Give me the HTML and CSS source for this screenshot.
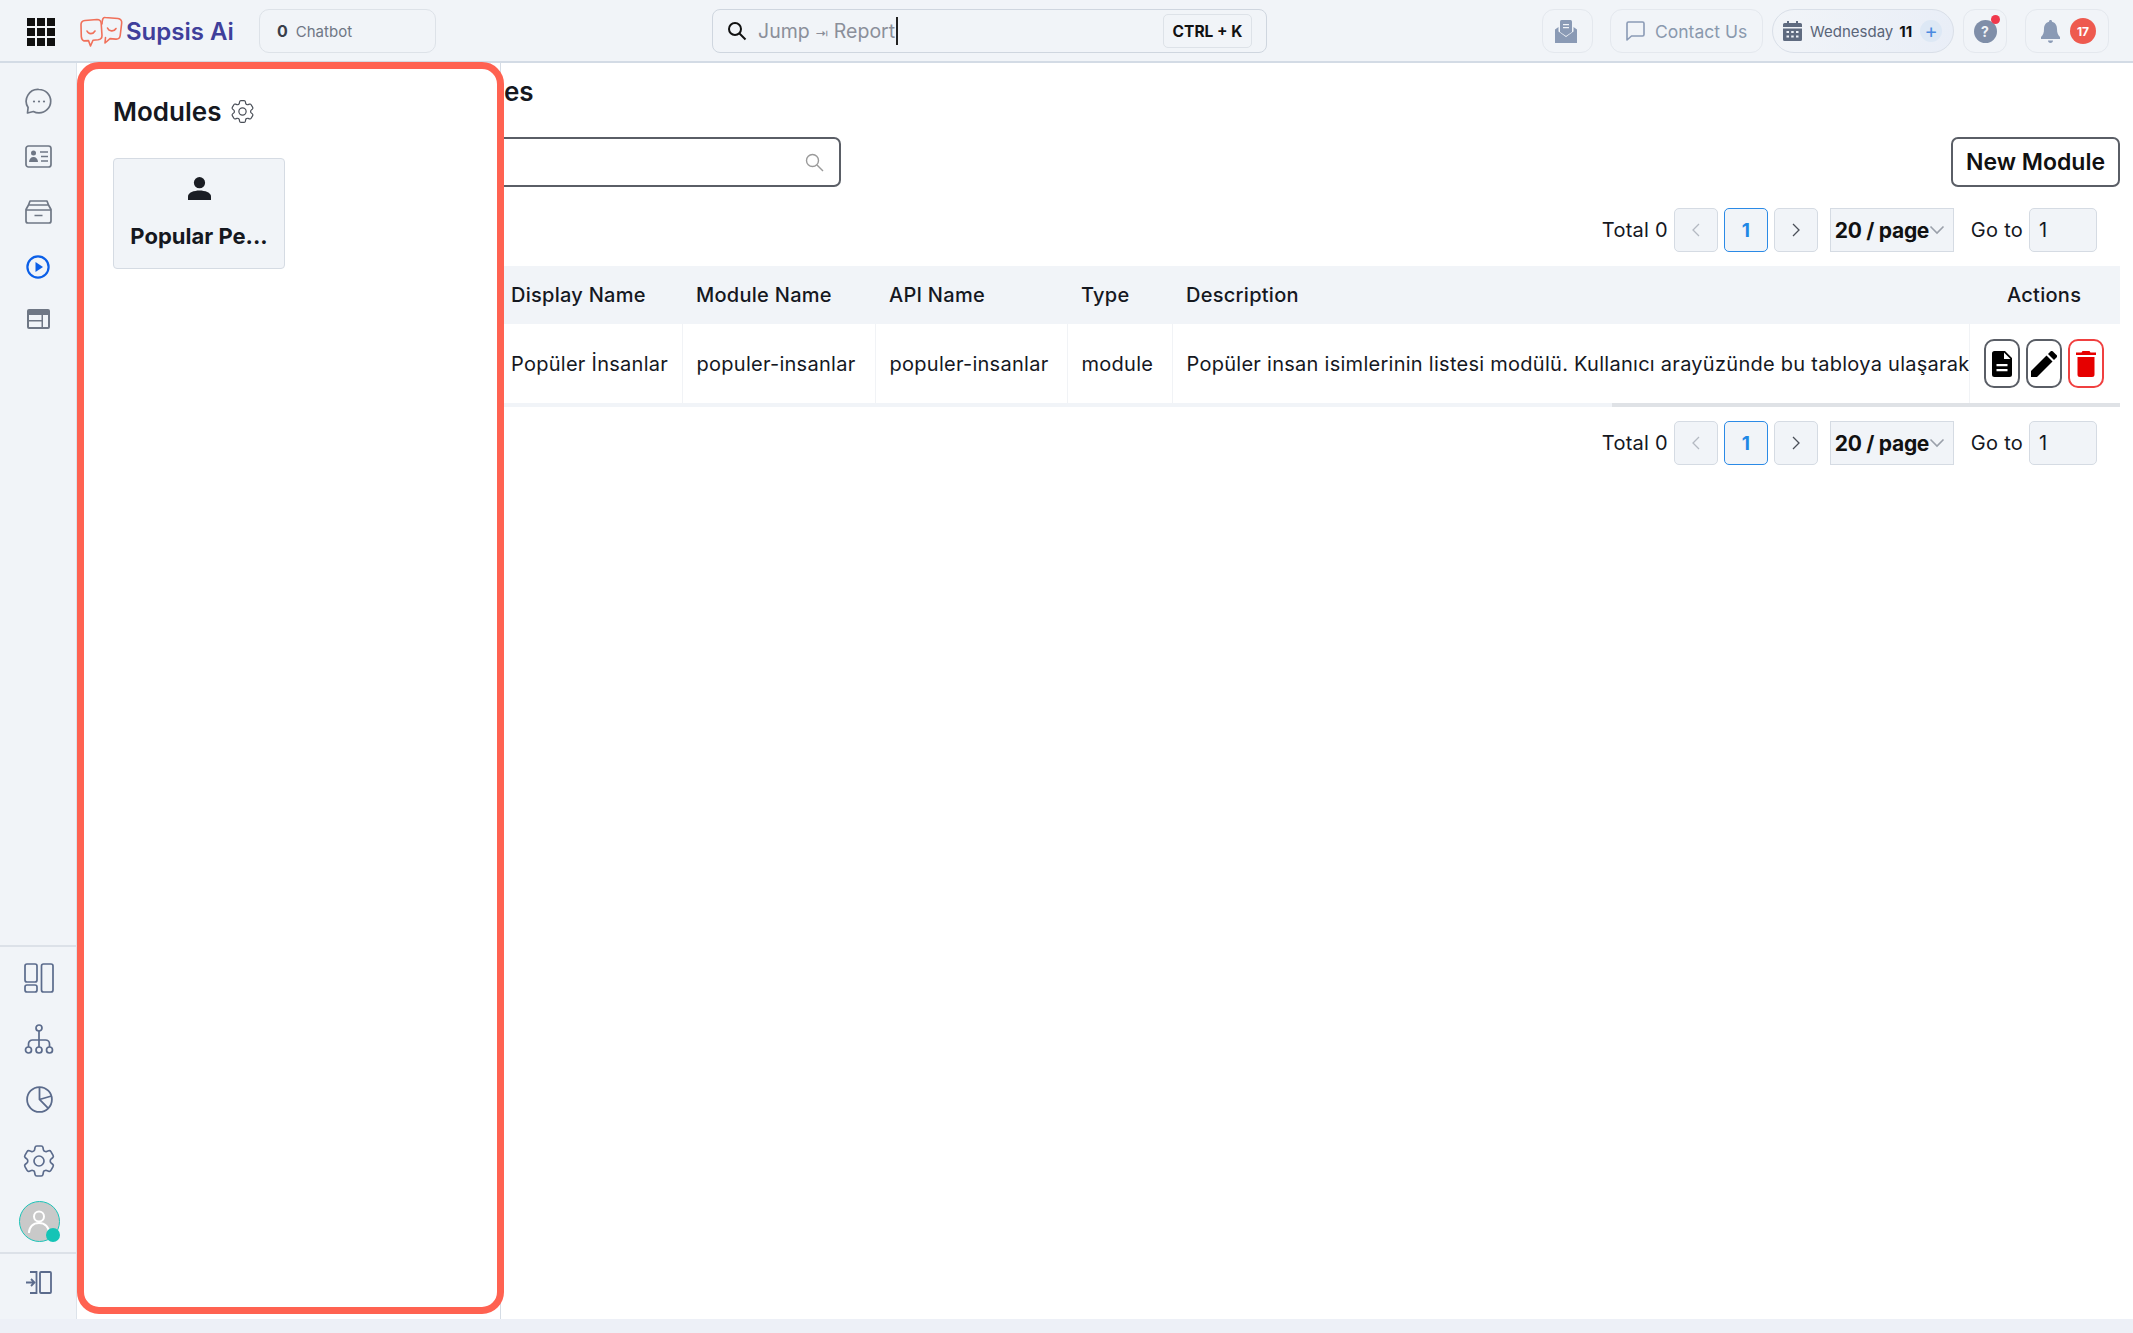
FILE: index.html
```html
<!DOCTYPE html>
<html lang="en">
<head>
  <meta charset="UTF-8">
  <meta name="viewport" content="width=device-width, initial-scale=1.0">
  <link rel="stylesheet" href="styles.css">
  <title>Modules</title>
</head>
<body>
  <svg class="defs" width="0" height="0">
    <symbol id="gear" viewBox="0 0 24 24">
      <path fill="none" stroke="currentColor" stroke-linejoin="round" d="M9.594 3.94c.09-.542.56-.94 1.11-.94h2.593c.55 0 1.02.398 1.11.94l.213 1.281c.063.374.313.686.645.87.074.04.147.083.22.127.325.196.72.257 1.075.124l1.217-.456a1.125 1.125 0 0 1 1.37.49l1.296 2.247a1.125 1.125 0 0 1-.26 1.431l-1.003.827c-.293.241-.438.613-.43.992a7.723 7.723 0 0 1 0 .255c-.008.378.137.75.43.991l1.004.827c.424.35.534.955.26 1.43l-1.298 2.247a1.125 1.125 0 0 1-1.369.491l-1.217-.456c-.355-.133-.75-.072-1.076.124a6.47 6.47 0 0 1-.22.128c-.331.183-.581.495-.644.869l-.213 1.281c-.09.543-.56.94-1.11.94h-2.594c-.55 0-1.019-.398-1.11-.94l-.213-1.281c-.062-.374-.312-.686-.644-.87a6.52 6.52 0 0 1-.22-.127c-.325-.196-.72-.257-1.076-.124l-1.217.456a1.125 1.125 0 0 1-1.369-.49l-1.297-2.247a1.125 1.125 0 0 1 .26-1.431l1.004-.827c.292-.24.437-.613.43-.991a6.932 6.932 0 0 1 0-.255c.007-.38-.138-.751-.43-.992l-1.004-.827a1.125 1.125 0 0 1-.26-1.43l1.297-2.247a1.125 1.125 0 0 1 1.37-.491l1.216.456c.356.133.751.072 1.076-.124.072-.044.146-.086.22-.128.332-.183.582-.495.644-.869l.214-1.28Z"/>
      <circle cx="12" cy="12" r="3" fill="none" stroke="currentColor"/>
    </symbol>
    <symbol id="chev-left" viewBox="0 0 12 16"><path fill="none" stroke="currentColor" stroke-width="1.3" d="M9 2 3 8l6 6"/></symbol>
    <symbol id="chev-right" viewBox="0 0 12 16"><path fill="none" stroke="currentColor" stroke-width="1.3" d="m3 2 6 6-6 6"/></symbol>
    <symbol id="chev-down" viewBox="0 0 16 10"><path fill="none" stroke="currentColor" stroke-width="1.6" d="m1.500 1.500 6.500 6.500 6.500-6.500"/></symbol>
  </svg>

  <!-- Top bar -->
  <header class="topbar">
    <div class="apps"><i></i><i></i><i></i><i></i><i></i><i></i><i></i><i></i><i></i></div>
    <div class="logo">
      <svg width="43" height="31" viewBox="0 0 43 31" fill="none" stroke="#f0705a" stroke-width="1.6" stroke-linejoin="round" stroke-linecap="round">
        <path d="M5 4.500 17 3.500c2.500 0 4 1.500 4.200 4l.8 12c0 2.500-1.500 4-4 4.300l-5 .4-2.500 5.800-2-5.400-4.500.3C2.500 24.500 1.500 22.500 1.300 20.500L1 8.500C1 6 2.500 4.800 5 4.500Z"/>
        <path d="M25 1.500 38 2.500c2.500.3 4 2 3.700 4.500l-1.500 12.500c-.3 2.500-2 3.800-4.500 3.600l-5.700-.5-5 4.400.5-5.400M22 8c.2-4 .8-6.800 3-6.500"/>
        <path d="M7 15c1.500 3.500 6 3.500 8 0M27.500 12c1.500 3.500 6.500 4 8.500.5"/>
      </svg>
      <span>Supsis Ai</span>
    </div>
    <div class="chatbot"><b>0</b> Chatbot</div>
    <div class="jump">
      <svg width="20" height="20" viewBox="0 0 20 20" fill="none" stroke="#111" stroke-width="2"><circle cx="8" cy="8" r="6"/><path d="m12.500 12.500 6 6"/></svg>
      <span class="jump-text">Jump <small>⇥</small> Report</span><span class="caret"></span>
      <kbd>CTRL + K</kbd>
    </div>
    <div class="top-right">
      <div class="pill mail">
        <svg width="22" height="23" viewBox="0 0 22 23" fill="#8a9ab5"><path d="M5 1.500A1.500 1.500 0 0 1 6.500 0h9A1.500 1.500 0 0 1 17 1.500V12l-6 4-6-4Z"/><path d="M0 9.500 3.500 7v4.500L11 17l7.500-5.500V7L22 9.500V23H0Z"/><path fill="#f1f4f8" d="M8 4h6v1.300H8zM8 7h6v1.300H8z"/></svg>
      </div>
      <div class="pill contact">
        <svg width="19" height="20" viewBox="0 0 19 20" fill="none" stroke="#8a9ab5" stroke-width="1.6" stroke-linejoin="round"><path d="M1 2.500A1.500 1.500 0 0 1 2.500 1h14A1.500 1.500 0 0 1 18 2.500v11a1.500 1.500 0 0 1-1.500 1.500H5.500L1 19Z"/></svg>
        <span>Contact Us</span>
      </div>
      <div class="pill date">
        <svg width="19" height="20" viewBox="0 0 19 20" fill="#5f6b80"><path d="M4 0h2v3H4zM13 0h2v3h-2z"/><path d="M1.500 2h16A1.500 1.500 0 0 1 19 3.500V6H0V3.500A1.500 1.500 0 0 1 1.500 2ZM0 7.500h19v11a1.500 1.500 0 0 1-1.500 1.500h-16A1.500 1.500 0 0 1 0 18.500Z"/><path fill="#eef2f8" d="M3.500 10h2.500v2H3.500zM8.200 10h2.500v2H8.200zM13 10h2.500v2H13zM3.500 14.500h2.500v2H3.500zM8.200 14.500h2.500v2H8.200zM13 14.500h2.500v2H13z"/></svg>
        <span class="day">Wednesday</span><b>11</b>
        <span class="plus">+</span>
      </div>
      <div class="pill help">
        <span class="help-mark">?</span><span class="red-dot"></span>
      </div>
      <div class="pill bell">
        <svg width="19" height="23" viewBox="0 0 19 23" fill="#8a9ab5"><path d="M9.500 0c1 0 1.500.7 1.500 1.700C14.500 2.500 16 5.500 16 9c0 4 1 6 3 8v2H0v-2c2-2 3-4 3-8 0-3.500 1.500-6.500 5-7.300C8 .7 8.500 0 9.500 0ZM7 20.500h5c0 1.500-1 2.500-2.500 2.500S7 22 7 20.500Z"/></svg>
        <span class="count">17</span>
      </div>
    </div>
  </header>

  <div class="shell">
    <!-- Icon rail -->
    <nav class="rail">
      <div class="rail-top">
        <a class="rail-item"><svg width="27" height="27" viewBox="0 0 27 27" fill="none" stroke="#6f7785" stroke-width="1.7" stroke-linejoin="round"><path d="M14 1.500a11.700 11.700 0 0 1 0 23.400c-2.200 0-4-.5-5.600-1.400L2.500 25l.6-5.500A11.700 11.700 0 0 1 14 1.500Z"/><circle cx="9" cy="13.500" r="1.100" fill="#6f7785" stroke="none"/><circle cx="14" cy="13.500" r="1.100" fill="#6f7785" stroke="none"/><circle cx="19" cy="13.500" r="1.100" fill="#6f7785" stroke="none"/></svg></a>
        <a class="rail-item"><svg width="27" height="23" viewBox="0 0 27 23" fill="none" stroke="#6f7785" stroke-width="1.700"><rect x="1" y="1" width="25" height="21" rx="2.500"/><circle cx="8.500" cy="8" r="2.500" fill="#6f7785" stroke="none"/><path d="M4 17c0-3 2-5 4.500-5s4.500 2 4.500 5Z" fill="#6f7785" stroke="none"/><path d="M15 7h8M16 11.500h7M16 16h7"/></svg></a>
        <a class="rail-item"><svg width="27" height="24" viewBox="0 0 27 24" fill="none" stroke="#6f7785" stroke-width="1.700" stroke-linejoin="round"><path d="M5 1h17l1.500 4h-20ZM1 9.500 3.500 5h20L26 9.500V21a2 2 0 0 1-2 2H3a2 2 0 0 1-2-2Z"/><path d="M1 10h25M9.500 15.500h8"/></svg></a>
        <a class="rail-item"><svg width="24" height="24" viewBox="0 0 24 24" fill="none" stroke="#0b5fe8" stroke-width="2.200"><circle cx="12" cy="12" r="10.600"/><path d="M9.500 7 17 12l-7.500 5Z" fill="#0b5fe8" stroke="none"/></svg></a>
        <a class="rail-item last"><svg width="23" height="20" viewBox="0 0 23 20"><rect width="23" height="20" rx="2" fill="#6f7785"/><rect x="2" y="6" width="12.500" height="5" fill="#f1f4f8"/><rect x="2" y="12.500" width="12.500" height="5.500" fill="#f1f4f8"/><rect x="16" y="6" width="5" height="12" fill="#f1f4f8"/></svg></a>
      </div>
      <div class="rail-bottom">
        <a class="rail-item wide"><svg width="30" height="30" viewBox="0 0 30 30" fill="none" stroke="#5b6b8c" stroke-width="1.700"><rect x="1" y="1" width="12" height="18" rx="2"/><rect x="1" y="22" width="12" height="7" rx="2"/><rect x="17.500" y="1" width="11.500" height="28" rx="2"/></svg></a>
        <a class="rail-item wide"><svg width="30" height="30" viewBox="0 0 30 30" fill="none" stroke="#5b6b8c" stroke-width="1.700"><circle cx="15" cy="4" r="3"/><circle cx="4.500" cy="26" r="3"/><circle cx="15" cy="26" r="3"/><circle cx="25.500" cy="26" r="3"/><path d="M15 7v16M4.500 23v-3a4 4 0 0 1 4-4h13a4 4 0 0 1 4 4v3"/></svg></a>
        <a class="rail-item wide"><svg width="27" height="27" viewBox="0 0 27 27" fill="none" stroke="#5b6b8c" stroke-width="1.800"><circle cx="13.500" cy="13.500" r="12.400"/><path d="M13.500 1.100v12.400l8.800 8.800M13.500 13.500l12-3.500"/></svg></a>
        <a class="rail-item wide"><svg class="rail-gear" width="40" height="40"><use href="#gear"/></svg></a>
        <a class="rail-item wide">
          <span class="avatar">
            <svg width="22" height="24" viewBox="0 0 22 24" fill="none" stroke="#fff" stroke-width="2"><circle cx="11" cy="6.500" r="5"/><path d="M1 23c0-6 4-10 10-10s10 4 10 10"/></svg>
            <span class="online"></span>
          </span>
        </a>
        <a class="rail-exit"><svg width="27" height="23" viewBox="0 0 27 23" fill="none" stroke="#5b6b8c" stroke-width="1.800"><path d="M1 11.500h8M6 8l3.500 3.500L6 15" /><path d="M5 1h6.500v21H5"/><rect x="15" y="1" width="11" height="21" rx="1"/></svg></a>
      </div>
    </nav>

    <!-- Modules panel -->
    <aside class="panel">
      <div class="panel-head">
        <h2>Modules</h2>
        <svg class="panel-gear" width="29" height="29"><use href="#gear"/></svg>
      </div>
      <div class="module-card">
        <svg width="23" height="23" viewBox="0 0 23 23" fill="#1a1d24"><circle cx="11.500" cy="5.700" r="5.600"/><path d="M0 23v-3.500C0 15.500 6 13.500 11.500 13.500S23 15.500 23 19.500V23Z"/></svg>
        <span>Popular Pe...</span>
      </div>
    </aside>

    <!-- Main content -->
    <main class="main">
      <h1>es</h1>
      <div class="toolbar">
        <div class="search">
          <svg width="19" height="19" viewBox="0 0 19 19" fill="none" stroke="#9a9a9a" stroke-width="1.400"><circle cx="7.500" cy="7.500" r="6"/><path d="m12 12 6 6"/></svg>
        </div>
        <button class="new-module">New Module</button>
      </div>

      <div class="pager">
        <span>Total 0</span>
        <button class="page-btn off"><svg width="12" height="16"><use href="#chev-left"/></svg></button>
        <button class="page-btn current">1</button>
        <button class="page-btn"><svg width="12" height="16"><use href="#chev-right"/></svg></button>
        <div class="page-size"><span>20 / page</span><svg width="16" height="10"><use href="#chev-down"/></svg></div>
        <span class="goto">Go to</span>
        <div class="goto-input">1</div>
      </div>

      <table class="grid">
        <colgroup>
          <col class="c-display"><col class="c-module"><col class="c-api"><col class="c-type"><col class="c-desc"><col class="c-actions">
        </colgroup>
        <thead>
          <tr><th>Display Name</th><th>Module Name</th><th>API Name</th><th>Type</th><th>Description</th><th class="actions-head">Actions</th></tr>
        </thead>
        <tbody>
          <tr>
            <td>Popüler İnsanlar</td>
            <td>populer-insanlar</td>
            <td>populer-insanlar</td>
            <td>module</td>
            <td class="desc">Popüler insan isimlerinin listesi modülü. Kullanıcı arayüzünde bu tabloya ulaşarak</td>
            <td>
              <div class="actions">
                <button class="act"><svg width="20" height="26" viewBox="0 0 20 26" fill="#000"><path d="M2.500 0H13l7 7v16.500a2.500 2.500 0 0 1-2.500 2.500h-15A2.500 2.500 0 0 1 0 23.500v-21A2.500 2.500 0 0 1 2.500 0Z"/><path fill="#fff" d="M12 1.500V8h6.500ZM4.500 13h11v2.200h-11zM4.500 18h11v2.200h-11z"/></svg></button>
                <button class="act"><svg width="26" height="26" viewBox="0 0 26 26" fill="#000"><path d="M0 26v-6L15.500 4.500l6 6L6 26Z"/><path d="M17 3l2.500-2.500a1.700 1.700 0 0 1 2.400 0l3.600 3.600a1.700 1.700 0 0 1 0 2.400L23 9Z"/></svg></button>
                <button class="act danger"><svg width="20" height="26" viewBox="0 0 20 26" fill="#e60000"><path d="M6.500 0h7l1 1.500H20V4H0V1.500h5.500ZM1.500 6h17v17.500a2.500 2.500 0 0 1-2.500 2.500H4a2.500 2.500 0 0 1-2.500-2.500Z"/></svg></button>
              </div>
            </td>
          </tr>
        </tbody>
      </table>
      <div class="table-scroll"><div class="thumb"></div></div>

      <div class="pager">
        <span>Total 0</span>
        <button class="page-btn off"><svg width="12" height="16"><use href="#chev-left"/></svg></button>
        <button class="page-btn current">1</button>
        <button class="page-btn"><svg width="12" height="16"><use href="#chev-right"/></svg></button>
        <div class="page-size"><span>20 / page</span><svg width="16" height="10"><use href="#chev-down"/></svg></div>
        <span class="goto">Go to</span>
        <div class="goto-input">1</div>
      </div>
    </main>
  </div>

  <!-- Red highlight drawn over the panel -->
  <div class="highlight"></div>
</body>
</html>
```

FILE: styles.css
```css
* {
  box-sizing: border-box;
}
body {
  margin: 0;
  width: 2133px;
  height: 1333px;
  overflow: hidden;
  position: relative;
  display: flex;
  flex-direction: column;
  font-family: Inter, "Noto Sans", sans-serif;
  font-size: 20px;
  color: #15181f;
  background-color: #edf0f7;
}
button {
  font-family: inherit;
  cursor: pointer;
}
.defs {
  position: absolute;
}

/* top bar */
.topbar {
  height: 63px;
  flex: none;
  display: flex;
  align-items: flex-start;
  padding: 9px 24px 0 27px;
  background-color: #f1f4f8;
  border-bottom: 2px solid #d3dbe5;
}
.apps {
  width: 28px;
  height: 28px;
  margin-top: 9px;
  display: grid;
  grid-template-columns: repeat(3, 8px);
  grid-auto-rows: 8px;
  gap: 2px;
}
.apps i {
  background-color: #111;
}
.logo {
  width: 179px;
  height: 44px;
  margin-left: 25px;
  display: flex;
  align-items: center;
  gap: 3px;
  color: #3f3f9b;
  font-size: 24px;
  font-weight: 600;
}
.chatbot {
  width: 177px;
  height: 44px;
  margin-left: 0;
  padding-left: 17px;
  display: flex;
  align-items: center;
  gap: 8px;
  font-size: 15px;
  color: #6f7785;
  border: 1.5px solid #dde2e8;
  border-radius: 10px;
}
.chatbot b {
  font-size: 16px;
  color: #3a3f4a;
}
.jump {
  width: 555px;
  height: 44px;
  margin-left: 276px;
  padding: 0 14px 0 14px;
  display: flex;
  align-items: center;
  border: 1.5px solid #cfd6df;
  border-radius: 8px;
}
.jump-text {
  margin-left: 11px;
  font-size: 19.5px;
  color: #8b8f9a;
}
.jump-text small {
  font-size: 13px;
}
.caret {
  width: 1.5px;
  height: 28px;
  margin-left: 1px;
  background-color: #222;
}
kbd {
  margin-left: auto;
  width: 89px;
  height: 34px;
  display: flex;
  align-items: center;
  justify-content: center;
  font-family: inherit;
  font-size: 15.5px;
  font-weight: 700;
  color: #111;
  border: 1.5px solid #dde2e8;
  border-radius: 5px;
}
.top-right {
  margin-left: auto;
  display: flex;
}
.pill {
  height: 44px;
  display: flex;
  align-items: center;
  position: relative;
  border: 1.5px solid #e4e8ee;
  border-radius: 12px;
}
.mail {
  width: 51px;
  padding-right: 3px;
  justify-content: center;
}
.contact {
  width: 153px;
  margin-left: 17px;
  padding-left: 15px;
  gap: 10px;
  font-size: 17.5px;
  color: #8a99ae;
}
.date {
  width: 182px;
  margin-left: 9px;
  padding-left: 10px;
  font-size: 15px;
  background: linear-gradient(90deg, #f1f4f8, #e9eef7);
  border: 1.5px solid #d9dfe8;
  border-radius: 22px;
}
.day {
  margin-left: 8px;
  color: #5a6578;
}
.date b {
  margin-left: 6px;
  color: #111;
}
.plus {
  width: 22px;
  height: 22px;
  margin-left: 8px;
  display: flex;
  align-items: center;
  justify-content: center;
  font-size: 20px;
  color: #4a8ae0;
  background-color: #dde8f5;
  border-radius: 50%;
}
.help {
  width: 44px;
  margin-left: 9px;
  justify-content: center;
}
.help-mark {
  width: 23px;
  height: 23px;
  display: flex;
  align-items: center;
  justify-content: center;
  font-size: 14px;
  font-weight: 700;
  color: #f1f4f8;
  background-color: #7f8ea8;
  border-radius: 50%;
}
.red-dot {
  position: absolute;
  top: 5px;
  right: 6px;
  width: 9px;
  height: 9px;
  background-color: #f0384c;
  border-radius: 50%;
}
.bell {
  width: 84px;
  margin-left: 18px;
  padding-left: 15px;
  gap: 10px;
}
.count {
  width: 26px;
  height: 26px;
  display: flex;
  align-items: center;
  justify-content: center;
  font-size: 12px;
  font-weight: 700;
  color: #fff;
  background-color: #ee5a4f;
  border-radius: 50%;
}

/* page body */
.shell {
  height: 1256px;
  flex: none;
  display: flex;
  background-color: #fff;
}

/* icon rail */
.rail {
  width: 77px;
  flex: none;
  display: flex;
  flex-direction: column;
  justify-content: space-between;
  background-color: #f1f4f8;
  border-right: 1px solid #dde3ea;
}
.rail-top {
  padding-top: 11px;
}
.rail-item {
  height: 55px;
  display: flex;
  align-items: center;
  justify-content: center;
}
.rail-item.last {
  margin-top: -3px;
}
.rail-item.wide {
  height: 61px;
}
.rail-bottom {
  padding-left: 2px;
  border-top: 2px solid #dce1e8;
}
.rail-gear {
  color: #5b6b8c;
}
.avatar {
  width: 41px;
  height: 41px;
  position: relative;
  display: flex;
  align-items: center;
  justify-content: center;
  background-color: #c9c9c9;
  border: 1px solid #1cc4b8;
  border-radius: 50%;
}
.online {
  position: absolute;
  right: -1px;
  bottom: -1px;
  width: 14px;
  height: 14px;
  background-color: #14c4b6;
  border-radius: 50%;
}
.rail-exit {
  height: 67px;
  margin-left: -2px;
  padding-top: 17px;
  display: flex;
  justify-content: center;
  border-top: 2px solid #dce1e8;
}

/* modules panel */
.panel {
  width: 424px;
  flex: none;
  padding: 31px 0 0 36px;
  background-color: #fff;
  border-right: 1px solid #d5dce5;
}
.panel-head {
  height: 34px;
  display: flex;
  align-items: center;
  gap: 7px;
}
.panel-head h2 {
  margin: 0;
  font-size: 26px;
  font-weight: 600;
  color: #15181f;
}
.panel-gear {
  color: #4a4f58;
}
.module-card {
  width: 172px;
  height: 111px;
  margin-top: 30px;
  padding-top: 18px;
  display: flex;
  flex-direction: column;
  align-items: center;
  gap: 23px;
  background-color: #f1f4f8;
  border: 1.5px solid #d5dbe3;
  border-radius: 4px;
  font-size: 22px;
  font-weight: 700;
}

/* main */
.main {
  flex: 1;
  min-width: 0;
  padding: 0 13px 0 0;
  background-color: #fff;
}
.main h1 {
  height: 74px;
  margin: 0;
  padding: 12px 0 0 3px;
  font-size: 26px;
  line-height: 34px;
  font-weight: 600;
}
.toolbar {
  display: flex;
  justify-content: space-between;
}
.search {
  width: 340px;
  height: 50px;
  padding-right: 15px;
  display: flex;
  align-items: center;
  justify-content: flex-end;
  border: 2px solid #5a5e66;
  border-left: 0;
  border-radius: 0 7px 7px 0;
}
.new-module {
  width: 169px;
  height: 50px;
  padding: 0;
  font-size: 23px;
  font-weight: 600;
  color: #111;
  background-color: #fff;
  border: 2px solid #5a5e66;
  border-radius: 7px;
}
.pager {
  height: 44px;
  margin-top: 21px;
  padding-right: 23px;
  display: flex;
  align-items: center;
  justify-content: flex-end;
  font-size: 20px;
  letter-spacing: 0.25px;
}
.pager > span:first-child {
  margin-right: 6px;
}
.page-btn {
  width: 44px;
  height: 44px;
  margin-right: 6px;
  padding: 0;
  display: flex;
  align-items: center;
  justify-content: center;
  color: #4a4f58;
  background-color: #f1f4f8;
  border: 1.5px solid #d5dbe3;
  border-radius: 5px;
}
.page-btn.off {
  color: #b4b9c2;
}
.page-btn.current {
  font-size: 19px;
  font-weight: 700;
  color: #1f88e5;
  border-color: #2b8ae6;
}
.page-size {
  width: 124px;
  height: 44px;
  margin-left: 6px;
  padding: 0 9px 0 4px;
  display: flex;
  align-items: center;
  justify-content: space-between;
  font-size: 21px;
  font-weight: 700;
  letter-spacing: -0.3px;
  color: #9aa0aa;
  background-color: #f1f4f8;
  border: 1.5px solid #d5dbe3;
}
.page-size span {
  color: #111;
  white-space: nowrap;
}
.page-size svg {
  flex: none;
}
.goto {
  margin: 0 6px 0 17px;
}
.goto-input {
  width: 68px;
  height: 44px;
  padding-left: 9px;
  display: flex;
  align-items: center;
  background-color: #f1f4f8;
  border: 1.5px solid #d5dbe3;
  border-radius: 5px;
}

/* table */
.grid {
  width: 100%;
  margin-top: 14px;
  table-layout: fixed;
  border-collapse: collapse;
  font-size: 20px;
  letter-spacing: 0.27px;
}
.c-display { width: 181px; }
.c-module { width: 193px; }
.c-api { width: 192px; }
.c-type { width: 105px; }
.c-desc { width: 797px; }
.grid th {
  height: 58px;
  padding: 0 0 0 14px;
  text-align: left;
  font-weight: 500;
  background-color: #f1f4f8;
}
.grid th:first-child,
.grid td:first-child {
  padding-left: 10px;
}
.grid td {
  height: 79px;
  padding: 0 0 0 14px;
  white-space: nowrap;
  overflow: hidden;
  border-right: 1px solid #f1f3f6;
}
.grid td:last-child {
  padding: 0 0 0 14px;
  border-right: 0;
}
.grid th.actions-head {
  padding-left: 38px;
}
.actions {
  display: flex;
  gap: 6px;
}
.act {
  width: 36px;
  height: 49px;
  padding: 0;
  display: flex;
  align-items: center;
  justify-content: center;
  background-color: #fff;
  border: 2px solid #5a5e66;
  border-radius: 10px;
}
.act.danger {
  border-color: #f04040;
}
.table-scroll {
  height: 4px;
  background-color: #f1f4f8;
}
.thumb {
  width: 508px;
  height: 4px;
  margin-left: auto;
  background-color: #dfe2e6;
}
.table-scroll + .pager {
  margin-top: 14px;
}

/* red highlight */
.highlight {
  position: absolute;
  left: 77px;
  top: 62px;
  width: 427px;
  height: 1252px;
  border: 7px solid #ff6251;
  border-radius: 22px;
}
```
